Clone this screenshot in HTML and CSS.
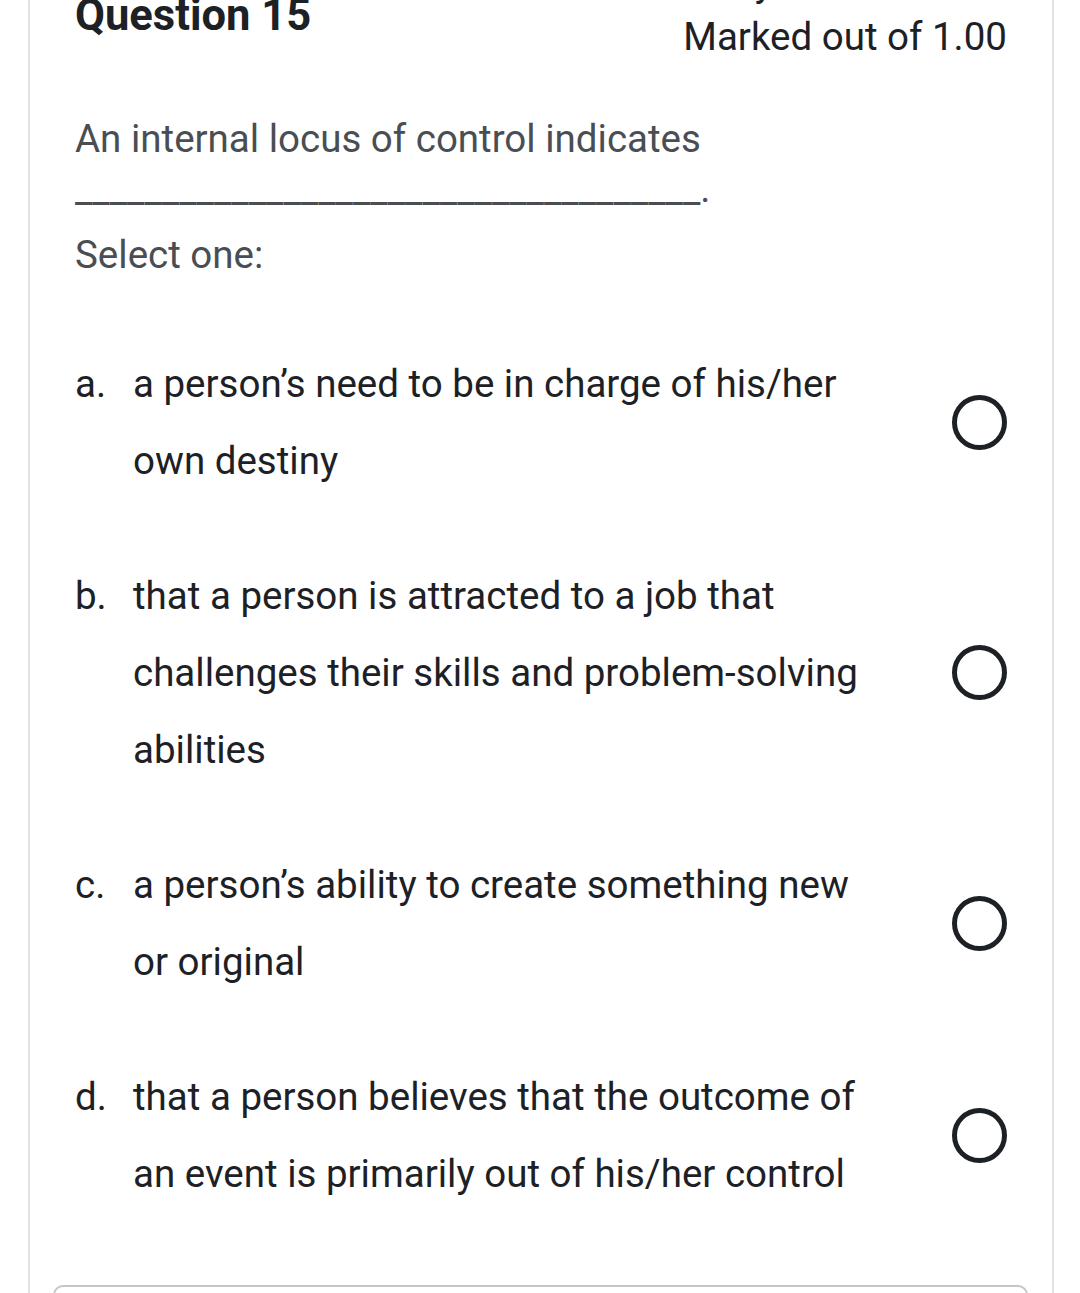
FILE: index.html
```html
<!DOCTYPE html>
<html lang="en">
<head>
    <meta charset="UTF-8">
    <meta name="viewport" content="width=device-width, initial-scale=1.0">
    <title>Question 15</title>
    <link rel="stylesheet" href="styles.css">
</head>
<body>
    <div class="que">
        <div class="info">
            <h3 class="qno">Question 15</h3>
            <div class="state">
                <div>Not yet answered</div>
                <div>Marked out of 1.00</div>
            </div>
        </div>

        <!-- Question text -->
        <div class="qtext">An internal locus of control indicates ____________________________________.</div>
        <div class="prompt">Select one:</div>

        <div class="answer">
            <div class="option">
                <div class="label">
                    <span class="answernumber">a.</span>
                    <span class="answertext">a person’s need to be in charge of his/her own destiny</span>
                </div>
                <span class="radio"></span>
            </div>
            <div class="option">
                <div class="label">
                    <span class="answernumber">b.</span>
                    <span class="answertext">that a person is attracted to a job that challenges their skills and problem-solving abilities</span>
                </div>
                <span class="radio"></span>
            </div>
            <div class="option">
                <div class="label">
                    <span class="answernumber">c.</span>
                    <span class="answertext">a person’s ability to create something new or original</span>
                </div>
                <span class="radio"></span>
            </div>
            <div class="option">
                <div class="label">
                    <span class="answernumber">d.</span>
                    <span class="answertext">that a person believes that the outcome of an event is primarily out of his/her control</span>
                </div>
                <span class="radio"></span>
            </div>
        </div>

        <div class="controls"></div>
    </div>
</body>
</html>
```

FILE: styles.css
```css
body {
    margin: 0;
    font-family: Roboto, "Noto Sans", sans-serif;
    background-color: #ffffff;
    color: #1d2125;
    overflow: hidden;
}
.que {
    margin: -62px 26px 0 28px;
    padding: 16px 45px 0 45px;
    border: 2px solid #e2e2e2;
    border-bottom: none;
}
.info {
    display: flex;
    justify-content: space-between;
    align-items: flex-start;
}
.qno {
    margin: 34px 0 0 0;
    font-size: 43.5px;
    font-weight: bold;
    line-height: 1.2;
}
.state {
    font-size: 38.5px;
    line-height: 54px;
}
.qtext {
    margin-top: 50px;
    font-size: 38.5px;
    line-height: 50px;
    color: #4a4e53;
}
.prompt {
    margin-top: 16px;
    font-size: 38.5px;
    line-height: 50px;
    color: #4a4e53;
}
.answer {
    margin-top: 65px;
    display: flex;
    flex-direction: column;
    gap: 58px;
}
.option {
    display: flex;
    align-items: center;
}
.label {
    flex: 1;
    display: flex;
    font-size: 38.5px;
    line-height: 77px;
}
.answernumber {
    width: 58px;
    flex-shrink: 0;
}
.answertext {
    flex: 1;
}
.radio {
    width: 45px;
    height: 45px;
    margin-left: 72px;
    border: 5px solid #1d2125;
    border-radius: 50%;
    flex-shrink: 0;
}
.controls {
    margin: 73px -21px 0 -22px;
    height: 120px;
    border: 2px solid #c6c6c6;
    border-radius: 10px;
}
```
